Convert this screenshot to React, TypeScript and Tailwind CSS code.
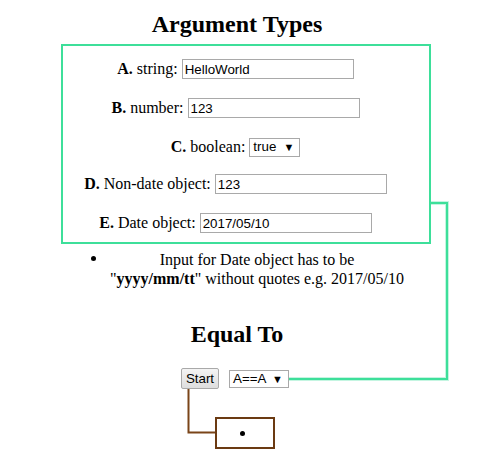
import React from "react";

const inputCls =
  "w-[172px] h-[20px] border border-[#a9a9a9] bg-white px-[2px] text-[13.33px] leading-[16px] text-black outline-none align-middle";
const sans = { fontFamily: '"Liberation Sans", Arial, sans-serif' } as const;

function FakeSelect({ value, w, h }: { value: string; w: string; h: string }) {
  return (
    <span
      className={`relative inline-flex items-center border border-[#a9a9a9] bg-white pl-[3px] text-[13.33px] text-black align-middle ${w} ${h}`}
      style={sans}
    >
      <span>{value}</span>
      <span className="pointer-events-none absolute right-[5px] top-1/2 -translate-y-1/2 text-[11px] leading-none">
        ▼
      </span>
    </span>
  );
}

function Row({ mt, children }: { mt: string; children: React.ReactNode }) {
  return (
    <div className={`flex h-[22px] items-center justify-center whitespace-pre ${mt}`}>{children}</div>
  );
}

export default function App() {
  return (
    <div
      className="relative w-[482px] h-[469px] overflow-hidden bg-white text-black text-[16px]"
      style={{ fontFamily: '"Liberation Serif", "Times New Roman", serif' }}
    >
      <h2 className="w-[474px] pt-[11px] text-center text-[24px] font-bold leading-[27px]">Argument Types</h2>

      <div className="ml-[61px] mt-[6px] w-[370px] h-[200px] border-2 border-[#3ddf9a] pr-[21px] pt-[12px]">
        <Row mt="mt-0">
          <b>A.</b> string: <input className={inputCls} style={sans} defaultValue="HelloWorld" />
        </Row>
        <Row mt="mt-[17px]">
          <b>B.</b> number: <input className={inputCls} style={sans} defaultValue="123" />
        </Row>
        <Row mt="mt-[17px]">
          <b>C.</b> boolean: <FakeSelect value="true" w="w-[51px]" h="h-[19px]" />
        </Row>
        <Row mt="mt-[15px]">
          <b>D.</b> Non-date object: <input className={inputCls} style={sans} defaultValue="123" />
        </Row>
        <Row mt="mt-[17px]">
          <b>E.</b> Date object: <input className={inputCls} style={sans} defaultValue="2017/05/10" />
        </Row>
      </div>

      <div className="mt-[6px] flex leading-[19px]">
        <div className="ml-[91px] w-[16px] pt-[6px]">
          <div className="h-[5px] w-[5px] rounded-full bg-black" />
        </div>
        <div className="w-[300px] text-center">
          Input for Date object has to be
          <br />"<b>yyyy/mm/tt</b>" without quotes e.g. 2017/05/10
        </div>
      </div>

      <h2 className="mt-[33px] w-[474px] text-center text-[24px] font-bold leading-[27px]">Equal To</h2>

      <div className="mt-[20px] flex w-[470px] items-center justify-center gap-[10px]">
        <button
          className="w-[38px] h-[21px] rounded-[2px] border border-[#a9a9a9] bg-gradient-to-b from-[#f4f4f4] to-[#dedede] text-[13.33px] text-black"
          style={sans}
        >
          Start
        </button>
        <FakeSelect value="A==A" w="w-[60px]" h="h-[18px]" />
      </div>

      <div className="ml-[215px] mt-[28px] flex w-[60px] h-[32px] items-center justify-center border-2 border-[#6b3a12] pr-[6px]">
        <div className="h-[5px] w-[5px] rounded-full bg-black" />
      </div>

      <svg className="pointer-events-none absolute left-0 top-0" width="482" height="469">
        <path d="M431 203 H447 V379 H289" fill="none" stroke="#3ddf9a" strokeOpacity="0.3" strokeWidth="4" />
        <path d="M431 203 H447 V379 H289" fill="none" stroke="#3ddf9a" strokeWidth="2" />
        <path d="M188.5 389 V432.5 H215" fill="none" stroke="#7a4519" strokeWidth="2" />
      </svg>
    </div>
  );
}
